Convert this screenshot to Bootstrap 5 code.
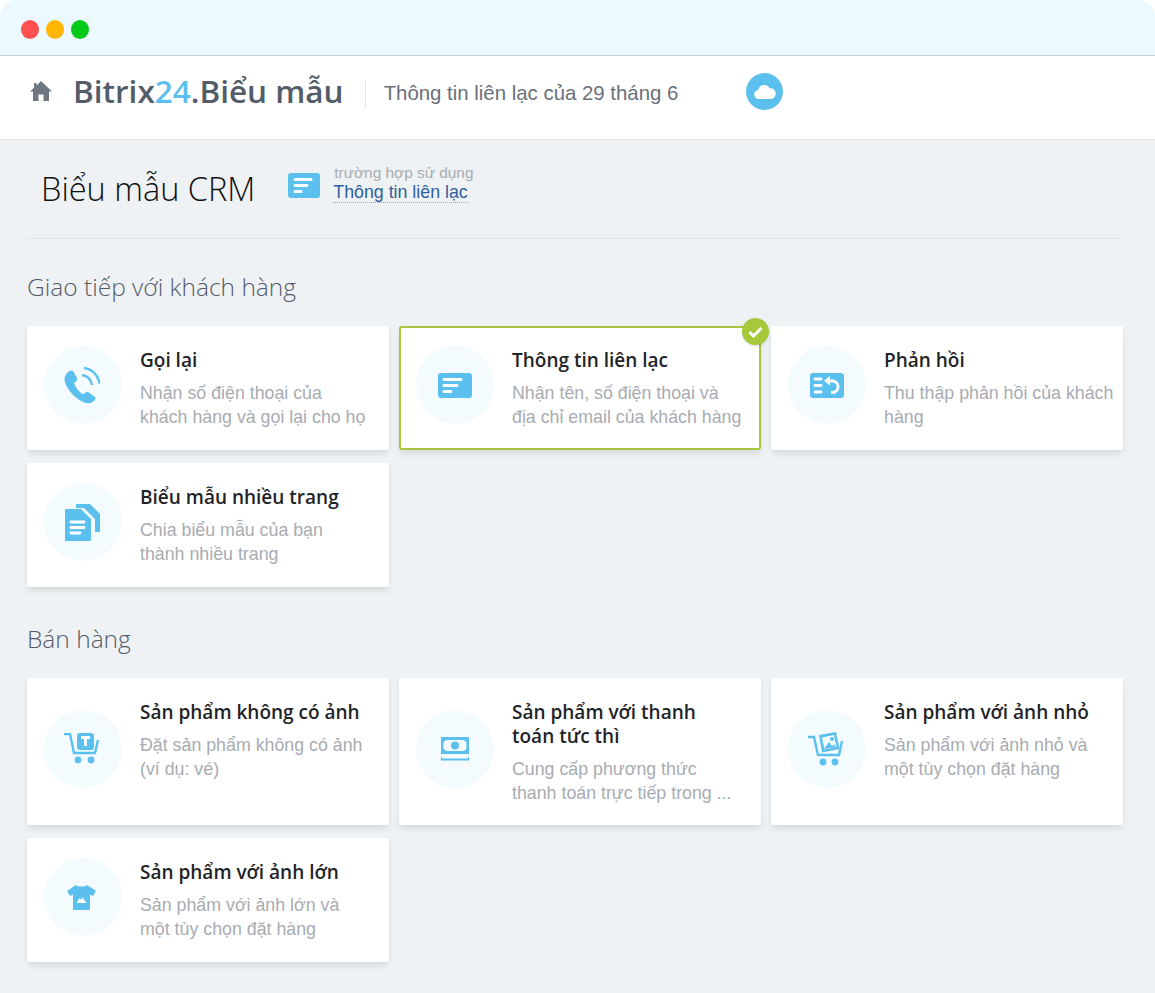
<!DOCTYPE html>
<html lang="vi">
<head>
    <meta charset="UTF-8">
    <meta name="viewport" content="width=device-width, initial-scale=1.0">
    <title>Bitrix24.Biểu mẫu</title>
    <link href="https://cdn.jsdelivr.net/npm/bootstrap@5.3.3/dist/css/bootstrap.min.css" rel="stylesheet">
    <style>
        html, body { height: 993px; overflow: hidden; }
        body { background: #fff; font-family: "Liberation Sans", Arial, sans-serif; }
        .win-bar { height: 56px; background: #ecf9fe; border-bottom: 1px solid #c5d0d3; border-top-left-radius: 16px; border-top-right-radius: 16px; padding: 3px 0 0 21px; gap: 7px; }
        .win-dot { width: 18px; height: 19px; border-radius: 50%; }
        .top-head { height: 84px; background: #fff; border-bottom: 1px solid #dfe3e5; padding: 0 0 13px 30px; }
        .brand-name { font-family: "Open Sans", sans-serif; font-weight: 600; font-size: 31.5px; color: #535c69; margin-left: 21px; line-height: 40px; white-space: nowrap; }
        .brand-name span { color: #5cc0ef; }
        .head-sub { font-size: 20.4px; color: #6a7079; border-left: 1px solid #e3e6e8; margin: 4px 0 0 21px; padding-left: 18px; height: 27px; line-height: 27px; white-space: nowrap; }
        .cloud-btn { width: 37px; height: 37px; border-radius: 50%; background: #5cc0ef; margin-left: 68px; }
        .page-wrap { background: #eff2f4; height: 853px; padding: 0 32px 0 27px; }
        .form-head { height: 99px; border-bottom: 1px solid #dfe3e5; padding: 0 0 0 14px; }
        .form-title { font-family: "Open Sans", sans-serif; font-weight: 300; font-size: 32.5px; color: #111; margin: 0 33px 0 0; line-height: 40px; }
        .form-mark { margin-bottom: 8px; }
        .usecase { margin: 0 0 9px 13px; }
        .usecase-top { font-size: 15.4px; color: #a8acb1; line-height: 17px; margin-left: 1px; }
        .usecase-link { font-size: 17.8px; color: #2e5f9e; line-height: 20px; border-bottom: 1px dotted #8fa6c4; text-decoration: none; display: inline-block; }
        .group-title { font-family: "Open Sans", sans-serif; font-weight: 300; font-size: 24.5px; color: #535c69; line-height: 32px; margin: 0 0 23px; }
        .group-one { margin-top: 32px; }
        .group-two { margin-top: 36px; }
        .form-grid { display: grid; grid-template-columns: 362px 362px 352px; column-gap: 10px; row-gap: 13px; }
        .form-tile { background: #fff; min-height: 124px; padding: 20px 8px 20px 17px; gap: 18px; box-shadow: 0 4px 6px -1px rgba(80, 95, 105, .18); border-radius: 2px; position: relative; }
        .form-tile.picked { outline: 2px solid #a5c93b; outline-offset: -2px; }
        .tile-icon { width: 78px; height: 78px; flex: none; border-radius: 50%; background: #f3fbff; align-self: center; margin: -21px 0 -15px; }
        .icon-left { margin-left: -3px; }
        .tile-name { font-family: "Open Sans", sans-serif; font-weight: 600; font-size: 19px; line-height: 24px; color: #1f2428; margin: 2px 0 10px; white-space: nowrap; }
        .tile-text { font-size: 17.8px; line-height: 23.5px; color: #a8acb1; margin: 0; white-space: nowrap; }
        .pick-mark { position: absolute; top: -8px; right: -8px; width: 27px; height: 27px; border-radius: 50%; background: #a5c93b; box-shadow: 0 1px 2px rgba(0, 0, 0, .15); }
    </style>
</head>
<body>

<div class="win-bar d-flex align-items-center">
    <div class="win-dot" style="background:#fe5050"></div>
    <div class="win-dot" style="background:#ffb703"></div>
    <div class="win-dot" style="background:#04c918"></div>
</div>

<header class="top-head d-flex align-items-center">
    <svg width="22" height="20" viewBox="0 0 22 20"><path fill="#6f7780" d="M11 0 22 10.500h-3V20h-5.500v-6.500h-5V20H3v-9.500H0l4-3.800V2h2.500v2.400z"/></svg>
    <div class="brand-name">Bitrix<span>24</span>.Biểu mẫu</div>
    <div class="head-sub">Thông tin liên lạc của 29 tháng 6</div>
    <div class="cloud-btn d-flex align-items-center justify-content-center">
        <svg width="22" height="16" viewBox="0 0 22 16"><path fill="#fff" d="M5 16a4.500 4.500 0 0 1-.6-9A6 6 0 0 1 15.600 5.200 5.400 5.400 0 0 1 17 16z"/></svg>
    </div>
</header>

<main class="page-wrap">
    <div class="form-head d-flex align-items-center">
        <h1 class="form-title">Biểu mẫu CRM</h1>
        <svg class="form-mark" width="32" height="25" viewBox="0 0 32 25"><rect width="32" height="25" rx="3" fill="#5cc0ef"/><path d="M7 6.500h16M7 12.500h12M7 18.500h6" stroke="#fff" stroke-width="3" stroke-linecap="round"/></svg>
        <div class="usecase">
            <div class="usecase-top">trường hợp sử dụng</div>
            <a class="usecase-link" href="#">Thông tin liên lạc</a>
        </div>
    </div>

    <h2 class="group-title group-one">Giao tiếp với khách hàng</h2>
    <div class="form-grid">
        <div class="form-tile d-flex">
            <div class="tile-icon d-flex align-items-center justify-content-center">
                <svg class="icon-left" width="36" height="38" viewBox="0 0 36 38"><path fill="#5cc0ef" d="M2 8.500C3 6.500 5 5 7 4.500c1-.2 1.800.2 2.300 1l3.700 6.500c.5 1 .3 2-.5 2.700L10 17c1.500 4.500 5 9 9 11.500l2.800-2.200c.8-.6 1.800-.6 2.600 0l6.300 4.500c1 .7 1.100 2 .4 2.900-1.800 2.300-4.600 4-7.600 3.500C12 35 1 21.500.5 13.500c-.1-1.800.6-3.500 1.500-5z"/><path d="M18 9c5 .8 9 4.500 10 10M20 2c8 1 14 7 15.500 15.500" fill="none" stroke="#5cc0ef" stroke-width="2.400"/></svg>
            </div>
            <div>
                <h3 class="tile-name">Gọi lại</h3>
                <p class="tile-text">Nhận số điện thoại của<br>khách hàng và gọi lại cho họ</p>
            </div>
        </div>
        <div class="form-tile picked d-flex">
            <div class="tile-icon d-flex align-items-center justify-content-center">
                <svg width="34" height="25" viewBox="0 0 34 25"><rect width="34" height="25" rx="3" fill="#5cc0ef"/><path d="M6 6.500h17M6 12.500h13M6 18.500h7" stroke="#fff" stroke-width="3" stroke-linecap="round"/></svg>
            </div>
            <div>
                <h3 class="tile-name">Thông tin liên lạc</h3>
                <p class="tile-text">Nhận tên, số điện thoại và<br>địa chỉ email của khách hàng</p>
            </div>
            <div class="pick-mark d-flex align-items-center justify-content-center">
                <svg width="15" height="12" viewBox="0 0 15 12"><path d="M1.500 6 5.500 10 13.500 2" fill="none" stroke="#fff" stroke-width="3"/></svg>
            </div>
        </div>
        <div class="form-tile d-flex">
            <div class="tile-icon d-flex align-items-center justify-content-center">
                <svg width="34" height="25" viewBox="0 0 34 25"><rect width="34" height="25" rx="3" fill="#5cc0ef"/><path d="M5 6h6M5 12.500h6M5 19h6" stroke="#fff" stroke-width="2.800" stroke-linecap="round"/><path d="M18 8h5a5.800 5.800 0 0 1 0 11.500h-2" fill="none" stroke="#fff" stroke-width="3"/><path fill="#fff" d="M20 3v9.500l-6-4.700z"/></svg>
            </div>
            <div>
                <h3 class="tile-name">Phản hồi</h3>
                <p class="tile-text">Thu thập phản hồi của khách<br>hàng</p>
            </div>
        </div>
        <div class="form-tile d-flex">
            <div class="tile-icon d-flex align-items-center justify-content-center">
                <svg width="36" height="37" viewBox="0 0 36 37"><path fill="#5cc0ef" d="M11 0h14l10 10v17a1 1 0 0 1-1 1h-4V15L19 4h-8z"/><path fill="#5cc0ef" d="M1 5h15l10 10v21a1 1 0 0 1-1 1H1a1 1 0 0 1-1-1V6a1 1 0 0 1 1-1z"/><path d="M6 18h13M6 23.500h13M6 29h9" stroke="#fff" stroke-width="2.800" stroke-linecap="round"/></svg>
            </div>
            <div>
                <h3 class="tile-name">Biểu mẫu nhiều trang</h3>
                <p class="tile-text">Chia biểu mẫu của bạn<br>thành nhiều trang</p>
            </div>
        </div>
    </div>

    <h2 class="group-title group-two">Bán hàng</h2>
    <div class="form-grid">
        <div class="form-tile d-flex">
            <div class="tile-icon d-flex align-items-center justify-content-center">
                <svg class="icon-left" width="36" height="31" viewBox="0 0 36 31"><path d="M0 1h6l4 19h21l3-13" fill="none" stroke="#5cc0ef" stroke-width="2.400"/><rect x="13" y="0" width="17" height="17" rx="3" fill="#5cc0ef"/><path d="M17 4.500h9M21.500 4.500V13" stroke="#fff" stroke-width="2.800"/><circle cx="14" cy="27" r="3.400" fill="#5cc0ef"/><circle cx="27" cy="27" r="3.400" fill="#5cc0ef"/></svg>
            </div>
            <div>
                <h3 class="tile-name">Sản phẩm không có ảnh</h3>
                <p class="tile-text">Đặt sản phẩm không có ảnh<br>(ví dụ: vé)</p>
            </div>
        </div>
        <div class="form-tile d-flex">
            <div class="tile-icon d-flex align-items-center justify-content-center">
                <svg width="28" height="24" viewBox="0 0 28 24"><path fill="#5cc0ef" fill-rule="evenodd" d="M0 0h28v17H0zM5 3 2.500 5.500v6L5 14h18l2.500-2.500v-6L23 3z"/><circle cx="14" cy="8.500" r="4" fill="#5cc0ef"/><path d="M0 20v2.500h28V20" fill="none" stroke="#5cc0ef" stroke-width="2"/></svg>
            </div>
            <div>
                <h3 class="tile-name">Sản phẩm với thanh<br>toán tức thì</h3>
                <p class="tile-text">Cung cấp phương thức<br>thanh toán trực tiếp trong ...</p>
            </div>
        </div>
        <div class="form-tile d-flex">
            <div class="tile-icon d-flex align-items-center justify-content-center">
                <svg class="icon-left" width="36" height="34" viewBox="0 0 36 34"><path d="M0 5h6l4 18h21l3-14" fill="none" stroke="#5cc0ef" stroke-width="2.400"/><path fill="#5cc0ef" fill-rule="evenodd" d="M11 3 28 0l3.500 17L14 20.500zM14 5.500l2.500 12 12-2.400-2.500-12z"/><path fill="#5cc0ef" d="M16 17l5-7 3 4 2-1.500 2 2.500z"/><circle cx="24" cy="7" r="2" fill="#5cc0ef"/><circle cx="15" cy="30" r="3.400" fill="#5cc0ef"/><circle cx="27" cy="30" r="3.400" fill="#5cc0ef"/></svg>
            </div>
            <div>
                <h3 class="tile-name">Sản phẩm với ảnh nhỏ</h3>
                <p class="tile-text">Sản phẩm với ảnh nhỏ và<br>một tùy chọn đặt hàng</p>
            </div>
        </div>
        <div class="form-tile d-flex">
            <div class="tile-icon d-flex align-items-center justify-content-center">
                <svg class="icon-left" width="29" height="25" viewBox="0 0 29 25"><path fill="#5cc0ef" d="M9 0c1.500 2 9.500 2 11 0l9 6-3 5-3-1.500V25H6V9.500L3 11 0 6z"/><path fill="#fff" d="M9.500 18l3-5 1.500 2 1.500-2.500 4 5.500z"/></svg>
            </div>
            <div>
                <h3 class="tile-name">Sản phẩm với ảnh lớn</h3>
                <p class="tile-text">Sản phẩm với ảnh lớn và<br>một tùy chọn đặt hàng</p>
            </div>
        </div>
    </div>
</main>

</body>
</html>
